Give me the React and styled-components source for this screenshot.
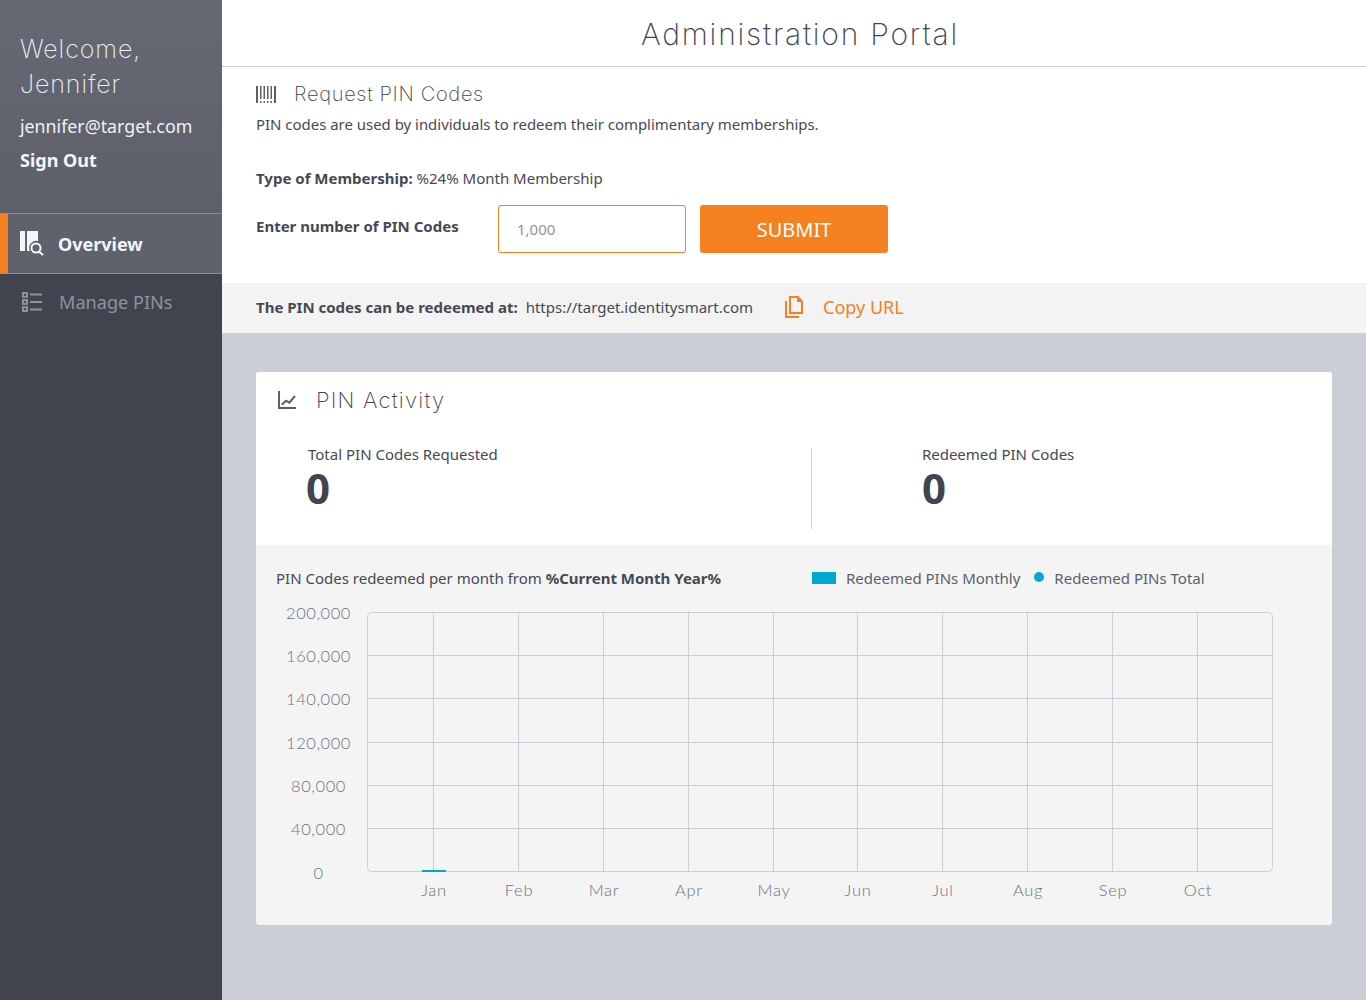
import React from "react";
import styled, { createGlobalStyle } from "styled-components";

const Global = createGlobalStyle`
  html, body { margin: 0; padding: 0; background: #cbced7; }
  * { box-sizing: border-box; }
  body { font-family: "Noto Sans", "Open Sans", sans-serif; color: #464953; }
`;
const DISPLAY = `"Inter", "Lato", "Noto Sans", sans-serif`;

const Page = styled.div`display: flex; width: 1366px; height: 1000px; overflow: hidden;`;
const Sidebar = styled.aside`width: 222px; flex: none; background: #41444e; display: flex; flex-direction: column;`;
const Profile = styled.div`
  height: 213px; padding: 32px 20px 0;
  background: linear-gradient(180deg, #666974 0%, #5d606b 100%);
`;
const Welcome = styled.div`
  font-family: ${DISPLAY}; font-weight: 200; font-size: 25px; line-height: 35px; color: #eceef2; letter-spacing: 0.9px;
`;
const Email = styled.div`font-size: 17.8px; line-height: 24px; color: #f0f1f4; margin-top: 12px;`;
const SignOut = styled.div`font-size: 18px; line-height: 24px; font-weight: 700; color: #f4f5f7; margin-top: 10px;`;
const NavItem = styled.div`
  display: flex; align-items: center; height: ${p => p.$active ? 61 : 56}px;
  padding-left: ${p => p.$active ? 12 : 22}px; gap: ${p => p.$active ? 14 : 17}px;
  font-size: ${p => p.$active ? 18 : 18.1}px; font-weight: ${p => p.$active ? 700 : 400};
  color: ${p => p.$active ? "#f4f5f7" : "#8f929c"};
  background: ${p => p.$active ? "#5f626d" : "transparent"};
  border-top: ${p => p.$active ? "1px solid #8a8d96" : "0"};
  border-bottom: ${p => p.$active ? "1px solid #8a8d96" : "0"};
  border-left: ${p => p.$active ? "8px solid #f58020" : "0"};
`;
const Main = styled.main`flex: 1; display: flex; flex-direction: column; min-width: 0;`;
const Header = styled.header`
  height: 67px; background: #fff; border-bottom: 1px solid #cbced7; display: flex; align-items: center; justify-content: center;
  font-family: ${DISPLAY}; font-weight: 200; font-size: 30px; color: #41444e; letter-spacing: 1.8px; padding: 2px 0 0 12px;
`;
const RequestPanel = styled.section`background: #fff; height: 216px; padding: 15px 34px 0;`;
const SectionTitle = styled.div`
  display: flex; align-items: center; gap: ${p => p.$gap}px; height: 24px;
  font-family: ${DISPLAY}; font-weight: 200; font-size: ${p => p.$size}px; color: #41444e; letter-spacing: ${p => p.$track}px;
`;
const Intro = styled.p`margin: 8px 0 0; font-size: 14.95px; line-height: 20px;`;
const Membership = styled.p`margin: 34px 0 0; font-size: 15px; line-height: 20px; strong { font-weight: 700; }`;
const FormRow = styled.div`display: flex; align-items: flex-start; margin-top: 17px;`;
const FormLabel = styled.label`width: 242px; font-size: 15px; line-height: 20px; font-weight: 700; padding-top: 11px;`;
const NumberBox = styled.div`
  width: 188px; height: 48px; border: 1px solid #f58020; border-radius: 3px; padding-left: 18px;
  display: flex; align-items: center; font-size: 15px; color: #90939c;
`;
const Submit = styled.button`
  width: 188px; height: 48px; margin-left: 14px; border: 0; border-radius: 3px; background: #f58020; color: #fff;
  font-family: inherit; font-size: 20px; padding: 0;
`;
const UrlBar = styled.div`
  height: 50px; background: #f3f3f3; padding: 0 0 2px 34px; display: flex; align-items: center; font-size: 15px;
  strong { font-weight: 700; margin-right: 8px; }
`;
const CopyLink = styled.span`display: flex; align-items: center; gap: 20px; margin-left: 32px; color: #f58020; font-size: 18px;`;
const Content = styled.div`flex: 1; padding: 39px 34px 0;`;
const Card = styled.section`background: #f4f4f4; border-radius: 3px; overflow: hidden; height: 553px;`;
const CardTop = styled.div`background: #fff; height: 173px; padding: 16px 22px 0;`;
const Stats = styled.div`display: flex; margin-top: 36px;`;
const Stat = styled.div`
  width: ${p => p.$w}px; height: 81px; padding-left: ${p => p.$pad}px;
  border-left: ${p => p.$divider ? "1px solid #cbced7" : "0"};
`;
const StatLabel = styled.div`font-size: 15px; line-height: 20px; margin-top: -4px; padding-left: ${p => p.$shift}px;`;
const StatValue = styled.div`font-size: 42px; line-height: 48px; font-weight: 700; color: #41444e;`;
const ChartHead = styled.div`display: flex; align-items: center; height: 20px; margin: 23px 0 0 20px; font-size: 15px; strong { font-weight: 700; }`;
const ChartTitle = styled.div`width: 536px;`;
const LegendBar = styled.i`display: block; width: 24px; height: 12px; background: #00a9d4;`;
const LegendDot = styled.i`display: block; width: 10px; height: 10px; margin-top: -3px; border-radius: 50%; background: #00a9d4;`;
const LegendLabel = styled.span`margin: 0 14px 0 ${p => p.$ml}px; color: #5d606b;`;
const Chart = styled.svg`display: block; margin-top: 1px;`;

const months = ["Jan","Feb","Mar","Apr","May","Jun","Jul","Aug","Sep","Oct"];
const xs = [433,518,603,688,773,857,942,1027,1112,1197];
const ys = [[200000,612],[160000,655],[140000,698],[120000,742],[80000,785],[40000,828],[0,872]];
const fontFam = `Lato, Inter, sans-serif`;

function PlotChart() {
  const ox = 256, oy = 589;
  return (
    <Chart width="1076" height="325" viewBox={`${ox} ${oy} 1076 325`}>
      <rect x="367.5" y="612.5" width="905" height="259" rx="4" fill="none" stroke="#cbced7" />
      {xs.map(x => <line key={x} x1={x + .5} x2={x + .5} y1="613" y2="871" stroke="#cbced7" />)}
      {ys.slice(1, -1).map(([, y]) => <line key={y} x1="368" x2="1272" y1={y + .5} y2={y + .5} stroke="#cbced7" />)}
      <rect x="422" y="870" width="24" height="2" fill="#00a9c8" />
      {ys.map(([v, y]) => (
        <text key={v} x="318.5" y={y + 7} textAnchor="middle" fontFamily={fontFam} fontWeight="300" fontSize="16.5" letterSpacing=".55" fill="#6e717a">
          {v.toLocaleString("en-US")}
        </text>
      ))}
      {months.map((m, i) => (
        <text key={m} x={xs[i] + 1} y="896" textAnchor="middle" fontFamily={fontFam} fontWeight="300" fontSize="16.5" letterSpacing=".7" fill="#6e717a">{m}</text>
      ))}
    </Chart>
  );
}

const BarcodeIcon = () => (
  <svg width="21" height="17" viewBox="0 0 21 17" fill="#5d606b">
    <rect x="0" y="0" width="2" height="17" />
    <rect x="18" y="0" width="2" height="17" />
    {[4, 7.5, 11, 14.5].map(x => (
      <g key={x}>
        <rect x={x} y="0" width="1.5" height="13" />
        <rect x={x} y="15" width="1.5" height="2" />
      </g>
    ))}
  </svg>
);
const ChartIcon = () => (
  <svg width="20" height="18" viewBox="0 0 20 18" fill="none" stroke="#5d606b" strokeWidth="2">
    <path d="M1 0v17h17" />
    <path d="M3.700 13.700l4.300-4 3.300 2 5.700-6.700" />
  </svg>
);
const CopyIcon = () => (
  <svg width="18" height="22" viewBox="0 0 18 22" fill="none" stroke="#f58020" strokeWidth="2">
    <path d="M5 1h8l4 4.500V17H5z" />
    <path d="M12 1h1l4 5h-5z" fill="#f58020" stroke="none" />
    <path d="M1 5v16h13" />
  </svg>
);
const OverviewIcon = () => (
  <svg width="24" height="25" viewBox="0 0 24 25" fill="none">
    <rect x="0" y="0" width="5" height="20" fill="#f4f5f7" />
    <path d="M7 0h11v10a7 7 0 0 0-8 10H7z" fill="#f4f5f7" />
    <circle cx="16" cy="17" r="4.500" stroke="#f4f5f7" strokeWidth="2" />
    <path d="M19 20.500l4 3.500" stroke="#f4f5f7" strokeWidth="2.200" />
  </svg>
);
const ListIcon = () => (
  <svg width="20" height="20" viewBox="0 0 20 20" fill="none" stroke="#8f929c">
    <rect x="1" y="1" width="4" height="3.800" strokeWidth="2" />
    <rect x="1" y="8.100" width="4" height="3.800" strokeWidth="2" />
    <rect x="1" y="15.200" width="4" height="3.800" strokeWidth="2" />
    <path d="M8 2.500h12M8 10h12M8 17.500h12" strokeWidth="2" />
  </svg>
);

export default function App() {
  return (
    <Page>
      <Global />
      <Sidebar>
        <Profile>
          <Welcome>Welcome,<br />Jennifer</Welcome>
          <Email>jennifer@target.com</Email>
          <SignOut>Sign Out</SignOut>
        </Profile>
        <NavItem $active><OverviewIcon />Overview</NavItem>
        <NavItem><ListIcon />Manage PINs</NavItem>
      </Sidebar>
      <Main>
        <Header>Administration Portal</Header>
        <RequestPanel>
          <SectionTitle $size={20} $gap={17} $track={0.7}><BarcodeIcon />Request PIN Codes</SectionTitle>
          <Intro>PIN codes are used by individuals to redeem their complimentary memberships.</Intro>
          <Membership><strong>Type of Membership:</strong> %24% Month Membership</Membership>
          <FormRow>
            <FormLabel>Enter number of PIN Codes</FormLabel>
            <NumberBox>1,000</NumberBox>
            <Submit>SUBMIT</Submit>
          </FormRow>
        </RequestPanel>
        <UrlBar>
          <strong>The PIN codes can be redeemed at:</strong> https://target.identitysmart.com
          <CopyLink><CopyIcon />Copy URL</CopyLink>
        </UrlBar>
        <Content>
          <Card>
            <CardTop>
              <SectionTitle $size={22} $gap={18} $track={1.2}><ChartIcon />PIN Activity</SectionTitle>
              <Stats>
                <Stat $w={534} $pad={28}>
                  <StatLabel $shift={2}>Total PIN Codes Requested</StatLabel>
                  <StatValue>0</StatValue>
                </Stat>
                <Stat $w={500} $pad={110} $divider>
                  <StatLabel $shift={0}>Redeemed PIN Codes</StatLabel>
                  <StatValue>0</StatValue>
                </Stat>
              </Stats>
            </CardTop>
            <ChartHead>
              <ChartTitle>PIN Codes redeemed per month from <strong>%Current Month Year%</strong></ChartTitle>
              <LegendBar /><LegendLabel $ml={10}>Redeemed PINs Monthly</LegendLabel>
              <LegendDot /><LegendLabel $ml={10}>Redeemed PINs Total</LegendLabel>
            </ChartHead>
            <PlotChart />
          </Card>
        </Content>
      </Main>
    </Page>
  );
}
